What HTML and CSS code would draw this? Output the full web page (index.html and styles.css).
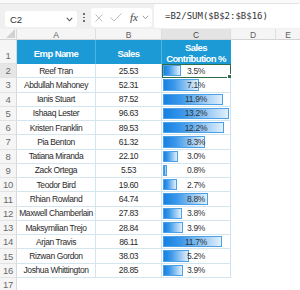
FILE: index.html
```html
<!DOCTYPE html>
<html>
<head>
<meta charset="utf-8">
<link rel="stylesheet" href="styles.css">
</head>
<body>
<div class="topstrip"></div>
<div class="fbar">
  <div class="namebox"><span class="ref">C2</span>
    <svg class="chev" width="7" height="5" viewBox="0 0 7 5"><polyline points="0.8,0.8 3.5,3.8 6.2,0.8" fill="none" stroke="#555" stroke-width="1.1"/></svg>
  </div>
  <div class="dots"><i></i><i></i><i></i></div>
  <div class="fnbox">
    <svg class="xicon" width="8" height="8" viewBox="0 0 8 8"><path d="M0.5 0.5L7.5 7.5M7.5 0.5L0.5 7.5" stroke="#bdbdbd" stroke-width="1"/></svg>
    <svg class="check" width="12" height="9" viewBox="0 0 12 9"><polyline points="0.5,4.5 4,8 11.5,0.5" fill="none" stroke="#bdbdbd" stroke-width="1"/></svg>
    <span class="fx">fx</span>
    <svg class="chev2" width="7" height="5" viewBox="0 0 7 5"><polyline points="0.8,0.8 3.5,3.8 6.2,0.8" fill="none" stroke="#9a9a9a" stroke-width="1"/></svg>
  </div>
  <div class="formula">=B2/SUM($B$2:$B$16)</div>
</div>
<div class="sheet">
  <div class="corner"><svg width="9" height="9" viewBox="0 0 9 9"><polygon points="9,0 9,9 0,9" fill="#d2d2d2"/></svg></div>
  <div class="ch">A</div><div class="ch">B</div><div class="ch sel">C</div><div class="ch">D</div><div class="ch last">E</div>

  <div class="rh rh1">1</div>
  <div class="th">Emp Name</div><div class="th">Sales</div><div class="th th-c">Sales<br>Contribution %</div><div class="e"></div><div class="e"></div>

  <div class="rh rsel">2</div><div class="td">Reef Tran</div><div class="td">25.53</div><div class="pc cur"><span class="bar" style="width:17.5px"></span><span class="v">3.5%</span></div><div class="e"></div><div class="e"></div>
  <div class="rh">3</div><div class="td">Abdullah Mahoney</div><div class="td">52.31</div><div class="pc"><span class="bar" style="width:35.5px"></span><span class="v">7.1%</span></div><div class="e"></div><div class="e"></div>
  <div class="rh">4</div><div class="td">Ianis Stuart</div><div class="td">87.52</div><div class="pc"><span class="bar" style="width:59.5px"></span><span class="v">11.9%</span></div><div class="e"></div><div class="e"></div>
  <div class="rh">5</div><div class="td">Ishaaq Lester</div><div class="td">96.63</div><div class="pc"><span class="bar" style="width:66px"></span><span class="v">13.2%</span></div><div class="e"></div><div class="e"></div>
  <div class="rh">6</div><div class="td">Kristen Franklin</div><div class="td">89.53</div><div class="pc"><span class="bar" style="width:61px"></span><span class="v">12.2%</span></div><div class="e"></div><div class="e"></div>
  <div class="rh">7</div><div class="td">Pia Benton</div><div class="td">61.32</div><div class="pc"><span class="bar" style="width:42px"></span><span class="v">8.3%</span></div><div class="e"></div><div class="e"></div>
  <div class="rh">8</div><div class="td">Tatiana Miranda</div><div class="td">22.10</div><div class="pc"><span class="bar" style="width:15px"></span><span class="v">3.0%</span></div><div class="e"></div><div class="e"></div>
  <div class="rh">9</div><div class="td">Zack Ortega</div><div class="td">5.53</div><div class="pc"><span class="bar" style="width:4px"></span><span class="v">0.8%</span></div><div class="e"></div><div class="e"></div>
  <div class="rh">10</div><div class="td">Teodor Bird</div><div class="td">19.60</div><div class="pc"><span class="bar" style="width:13.5px"></span><span class="v">2.7%</span></div><div class="e"></div><div class="e"></div>
  <div class="rh">11</div><div class="td">Rhian Rowland</div><div class="td">64.74</div><div class="pc"><span class="bar" style="width:44.5px"></span><span class="v">8.8%</span></div><div class="e"></div><div class="e"></div>
  <div class="rh">12</div><div class="td">Maxwell Chamberlain</div><div class="td">27.83</div><div class="pc"><span class="bar" style="width:19px"></span><span class="v">3.8%</span></div><div class="e"></div><div class="e"></div>
  <div class="rh">13</div><div class="td">Maksymilian Trejo</div><div class="td">28.84</div><div class="pc"><span class="bar" style="width:19.5px"></span><span class="v">3.9%</span></div><div class="e"></div><div class="e"></div>
  <div class="rh">14</div><div class="td">Arjan Travis</div><div class="td">86.11</div><div class="pc"><span class="bar" style="width:58.5px"></span><span class="v">11.7%</span></div><div class="e"></div><div class="e"></div>
  <div class="rh">15</div><div class="td">Rizwan Gordon</div><div class="td">38.03</div><div class="pc"><span class="bar" style="width:26px"></span><span class="v">5.2%</span></div><div class="e"></div><div class="e"></div>
  <div class="rh">16</div><div class="td">Joshua Whittington</div><div class="td">28.85</div><div class="pc"><span class="bar" style="width:19.5px"></span><span class="v">3.9%</span></div><div class="e"></div><div class="e"></div>
  <div class="rh">17</div><div class="e"></div><div class="e"></div><div class="e"></div><div class="e"></div><div class="e"></div>
</div>
</body>
</html>
```
FILE: styles.css
```css
html, body {
  margin: 0;
  padding: 0;
}
body {
  width: 300px;
  height: 290px;
  overflow: hidden;
  background: #ffffff;
  font-family: "Liberation Sans", Arial, sans-serif;
  color: #262626;
}
* { box-sizing: border-box; }

.topstrip {
  height: 4px;
  background: #fafafa;
  border-bottom: 1px solid #e2e2e2;
  border-bottom-right-radius: 3px;
}
.fbar {
  height: 25px;
  background: #f0f0f0;
  display: flex;
  align-items: flex-end;
  padding-bottom: 1px;
}
.namebox {
  width: 72px;
  height: 16px;
  margin-left: 5px;
  margin-bottom: 1px;
  background: #fff;
  border-radius: 3px;
  display: flex;
  align-items: center;
  justify-content: space-between;
  padding: 0 4px 0 5px;
}
.ref {
  font-size: 9.5px;
  color: #333;
}
.dots {
  width: 6px;
  margin-left: 4px;
  height: 19px;
  margin-bottom: 1px;
  display: flex;
  flex-direction: column;
  align-items: center;
  justify-content: center;
  gap: 2px;
}
.dots i {
  display: block;
  width: 1.6px;
  height: 1.6px;
  border-radius: 50%;
  background: #555;
}
.fnbox {
  width: 61px;
  height: 19px;
  margin-left: 4px;
  margin-bottom: 1px;
  background: #fff;
  border-radius: 3px;
  display: flex;
  align-items: center;
  padding-left: 4px;
}
.check { margin-left: 7px; }
.fx {
  margin-left: 8px;
  font-family: "Liberation Serif", "Times New Roman", serif;
  font-style: italic;
  font-size: 11px;
  color: #444;
  line-height: 1;
}
.chev2 { margin-left: 4px; }
.formula {
  flex: 1;
  height: 24px;
  margin-left: 2px;
  background: #fff;
  border-radius: 3px 0 0 3px;
  padding-left: 11px;
  font-family: "DejaVu Sans Mono", "Liberation Mono", monospace;
  font-size: 9px;
  line-height: 24px;
  color: #333;
  white-space: nowrap;
}

.sheet {
  display: grid;
  grid-template-columns: 17px 79px 66px 69px 45px 24px;
  grid-template-rows: 11px 24px repeat(15, 14.27px) 14px;
}
.corner {
  background: #f5f5f5;
  border-right: 1px solid #d9d9d9;
  border-bottom: 1px solid #d4d4d4;
  display: flex;
  align-items: flex-end;
  justify-content: flex-end;
  padding: 0 1px 1px 0;
}
.ch {
  background: #f5f5f5;
  border-right: 1px solid #dedede;
  border-bottom: 1px solid #d4d4d4;
  font-size: 8.5px;
  color: #606060;
  display: flex;
  align-items: center;
  justify-content: center;
  padding-top: 1px;
}
.ch.sel { background: #e4e4e4; color: #444; }
.ch.last { border-right: none; }
.rh {
  background: #f5f5f5;
  border-right: 1px solid #d9d9d9;
  border-bottom: 1px solid #e3e3e3;
  font-size: 9.5px;
  letter-spacing: -0.2px;
  color: #6a6a6a;
  display: flex;
  align-items: center;
  justify-content: center;
}
.rh1 { align-items: flex-end; padding-bottom: 2px; }
.rh.rsel { background: #e6e6e6; }
.th {
  background: #1c9ad6;
  color: #fff;
  font-weight: bold;
  font-size: 9.5px;
  letter-spacing: -0.6px;
  line-height: 11px;
  text-align: center;
  white-space: nowrap;
  display: flex;
  align-items: center;
  justify-content: center;
  padding-top: 2px;
  border-right: 1px solid #52b2e2;
}
.th-c { border-right: 1px solid #1c9ad6; }
.td {
  font-size: 8.5px;
  letter-spacing: -0.4px;
  white-space: nowrap;
  color: #2a2a2a;
  display: flex;
  align-items: center;
  justify-content: center;
  border-right: 1px solid #d3e5ee;
  border-bottom: 1px solid #d3e5ee;
}
.pc {
  position: relative;
  display: grid;
  align-items: center;
  border-right: 1px solid #cfe3ee;
  border-bottom: 1px solid #d3e5ee;
}
.bar, .v { grid-area: 1 / 1; }
.bar {
  align-self: stretch;
  margin: 1px 0 1px 1px;
  background: linear-gradient(to right, #1681e2 0%, #3b98ea 30%, #9ccbf4 70%, #e2f0fc 100%);
  border: 1px solid #4aa1e8;
}
.v {
  text-align: center;
  font-size: 8.5px;
  letter-spacing: -0.3px;
  color: #333;
}
.cur {
  outline: 1.5px solid #2d6e4a;
  outline-offset: -1px;
}
.cur::after {
  content: "";
  position: absolute;
  right: -2px;
  bottom: -2px;
  width: 3px;
  height: 3px;
  background: #2d6e4a;
  border: 1px solid #fff;
}
.e { background: #fff; }
```
